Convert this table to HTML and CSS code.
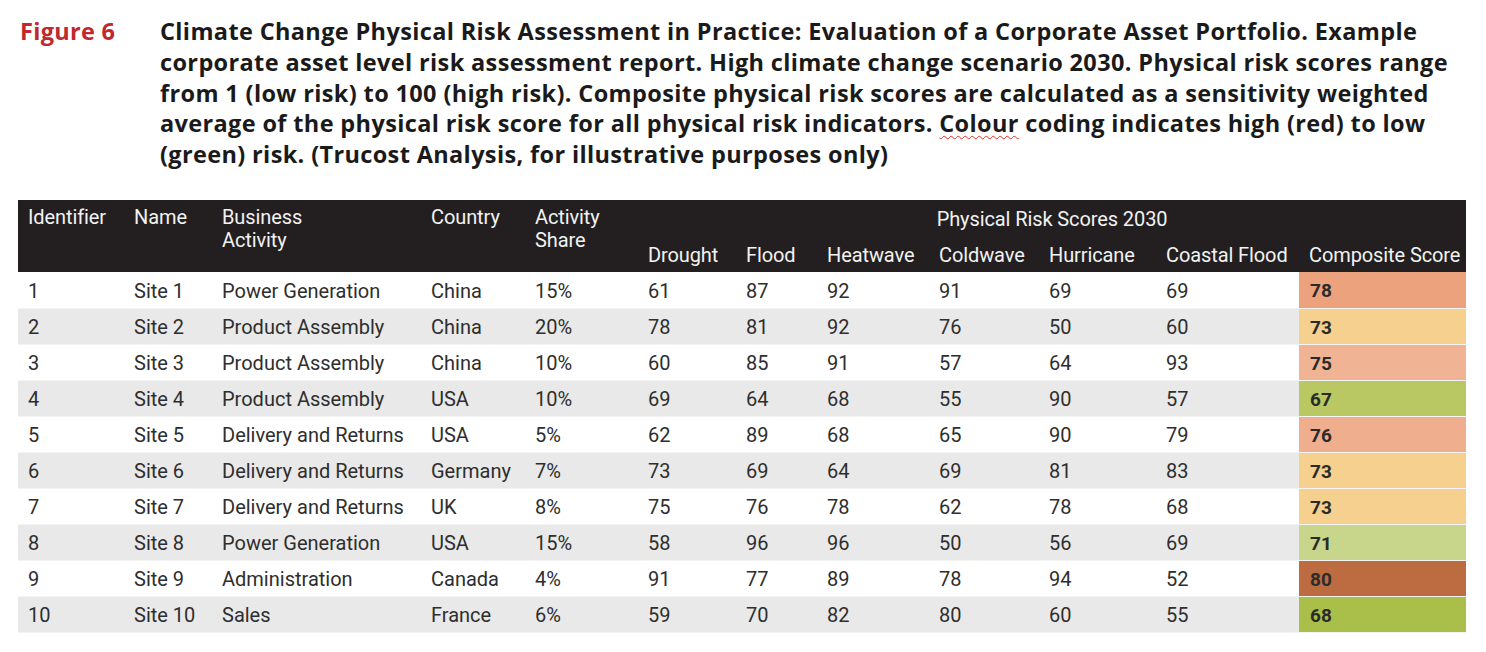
FILE: index.html
```html
<!DOCTYPE html>
<html>
<head>
<meta charset="utf-8">
<link rel="stylesheet" href="styles.css">
</head>
<body>
<div class="figure">
  <div class="caption">
    <div class="label">Figure 6</div>
    <div class="title">Climate Change Physical Risk Assessment in Practice: Evaluation of a Corporate Asset Portfolio. Example<br>corporate asset level risk assessment report. High climate change scenario 2030. Physical risk scores range<br>from 1 (low risk) to 100 (high risk). Composite physical risk scores are calculated as a sensitivity weighted<br>average of the physical risk score for all physical risk indicators. <span class="spell">Colour</span> coding indicates high (red) to low<br>(green) risk. (Trucost Analysis, for illustrative purposes only)</div>
  </div>
  <table class="risk">
    <colgroup>
      <col class="c-id"><col class="c-name"><col class="c-biz"><col class="c-country"><col class="c-share">
      <col class="c-drought"><col class="c-flood"><col class="c-heat"><col class="c-cold"><col class="c-hurr"><col class="c-coast"><col class="c-comp">
    </colgroup>
    <thead>
      <tr class="h1">
        <th rowspan="2" class="top">Identifier</th>
        <th rowspan="2" class="top">Name</th>
        <th rowspan="2" class="top">Business<br>Activity</th>
        <th rowspan="2" class="top">Country</th>
        <th rowspan="2" class="top">Activity<br>Share</th>
        <th colspan="7" class="group">Physical Risk Scores 2030</th>
      </tr>
      <tr class="h2">
        <th>Drought</th><th>Flood</th><th>Heatwave</th><th>Coldwave</th><th>Hurricane</th><th>Coastal Flood</th><th>Composite Score</th>
      </tr>
    </thead>
    <tbody>
      <tr><td>1</td><td>Site 1</td><td>Power Generation</td><td>China</td><td>15%</td><td>61</td><td>87</td><td>92</td><td>91</td><td>69</td><td>69</td><td class="comp s78">78</td></tr>
      <tr><td>2</td><td>Site 2</td><td>Product Assembly</td><td>China</td><td>20%</td><td>78</td><td>81</td><td>92</td><td>76</td><td>50</td><td>60</td><td class="comp s73">73</td></tr>
      <tr><td>3</td><td>Site 3</td><td>Product Assembly</td><td>China</td><td>10%</td><td>60</td><td>85</td><td>91</td><td>57</td><td>64</td><td>93</td><td class="comp s75">75</td></tr>
      <tr><td>4</td><td>Site 4</td><td>Product Assembly</td><td>USA</td><td>10%</td><td>69</td><td>64</td><td>68</td><td>55</td><td>90</td><td>57</td><td class="comp s67">67</td></tr>
      <tr><td>5</td><td>Site 5</td><td>Delivery and Returns</td><td>USA</td><td>5%</td><td>62</td><td>89</td><td>68</td><td>65</td><td>90</td><td>79</td><td class="comp s76">76</td></tr>
      <tr><td>6</td><td>Site 6</td><td>Delivery and Returns</td><td>Germany</td><td>7%</td><td>73</td><td>69</td><td>64</td><td>69</td><td>81</td><td>83</td><td class="comp s73">73</td></tr>
      <tr><td>7</td><td>Site 7</td><td>Delivery and Returns</td><td>UK</td><td>8%</td><td>75</td><td>76</td><td>78</td><td>62</td><td>78</td><td>68</td><td class="comp s73">73</td></tr>
      <tr><td>8</td><td>Site 8</td><td>Power Generation</td><td>USA</td><td>15%</td><td>58</td><td>96</td><td>96</td><td>50</td><td>56</td><td>69</td><td class="comp s71">71</td></tr>
      <tr><td>9</td><td>Site 9</td><td>Administration</td><td>Canada</td><td>4%</td><td>91</td><td>77</td><td>89</td><td>78</td><td>94</td><td>52</td><td class="comp s80">80</td></tr>
      <tr><td>10</td><td>Site 10</td><td>Sales</td><td>France</td><td>6%</td><td>59</td><td>70</td><td>82</td><td>80</td><td>60</td><td>55</td><td class="comp s68">68</td></tr>
    </tbody>
  </table>
</div>
</body>
</html>
```
FILE: styles.css
```css
html, body {
  margin: 0;
  padding: 0;
  background: #ffffff;
}
.figure {
  padding: 16px 20px 0 18px;
  width: 1448px;
}
.caption {
  display: flex;
  align-items: flex-start;
  font-family: "Open Sans", "Liberation Sans", sans-serif;
  font-weight: 700;
  font-size: 23.5px;
  line-height: 30.8px;
  height: 184px;
}
.label {
  color: #c1272d;
  width: 140px;
  padding-left: 2px;
  letter-spacing: 0.3px;
}
.title {
  color: #1a1a1a;
  letter-spacing: 0.36px;
}
.spell {
  text-decoration: underline wavy #e0302a;
  text-decoration-thickness: 1px;
  text-underline-offset: 3px;
}
.risk {
  border-collapse: collapse;
  table-layout: fixed;
  width: 1448px;
  font-family: "Roboto", "Liberation Sans", sans-serif;
  font-size: 20px;
  letter-spacing: 0;
}
.c-id { width: 106px; }
.c-name { width: 88px; }
.c-biz { width: 209px; }
.c-country { width: 104px; }
.c-share { width: 113px; }
.c-drought { width: 98px; }
.c-flood { width: 81px; }
.c-heat { width: 112px; }
.c-cold { width: 110px; }
.c-hurr { width: 117px; }
.c-coast { width: 143px; }
.c-comp { width: 167px; }
.risk thead th {
  background: #231f20;
  color: #f2f2f2;
  font-weight: 400;
  text-align: left;
  padding: 0 0 0 10px;
  white-space: nowrap;
  letter-spacing: -0.1px;
}
.risk thead .h1 { height: 36px; }
.risk thead .h2 { height: 36px; }
.risk thead th.top {
  vertical-align: top;
  padding-top: 6px;
  line-height: 23px;
}
.risk thead th.group {
  text-align: center;
  padding: 2px 0 0 0;
  vertical-align: middle;
}
.risk thead .h2 th {
  vertical-align: middle;
  padding-top: 1px;
}
.risk tbody tr {
  height: 36px;
}
.risk tbody tr:nth-child(even) td {
  background: #e9e9e9;
}
.risk tbody td {
  color: #2e2e2e;
  padding: 2px 0 0 10px;
  vertical-align: middle;
  white-space: nowrap;
  border-bottom: 1px solid #f4f4f4;
}
.risk tbody td.comp {
  font-weight: 700;
  font-size: 19px;
  color: #2b2b2b;
  padding-left: 11px;
}
.risk tbody tr td.s78 { background: #eca27c; }
.risk tbody tr td.s73 { background: #f6d08f; }
.risk tbody tr td.s75 { background: #f0b495; }
.risk tbody tr td.s67 { background: #b9c862; }
.risk tbody tr td.s76 { background: #efae8d; }
.risk tbody tr td.s71 { background: #c8d68b; }
.risk tbody tr td.s80 { background: #bd6b41; }
.risk tbody tr td.s68 { background: #a9bf4a; }
```
